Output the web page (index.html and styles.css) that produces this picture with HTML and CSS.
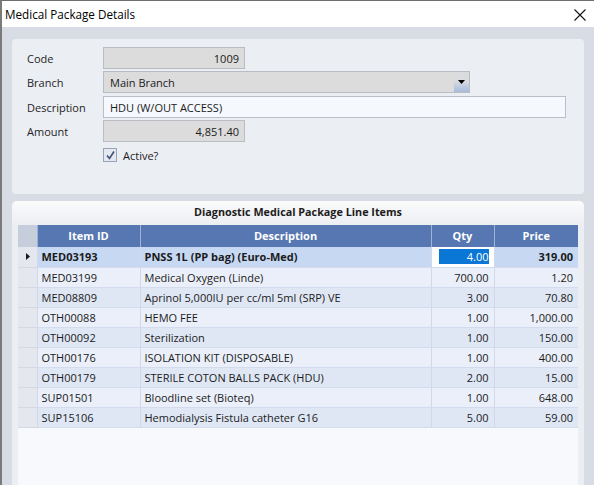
FILE: index.html
```html
<!DOCTYPE html>
<html>
<head>
<meta charset="utf-8">
<link rel="stylesheet" href="styles.css">
</head>
<body>
<div class="window">
  <div class="titlebar">
    <span class="title">Medical Package Details</span>
    <svg class="close" width="12" height="12" viewBox="0 0 12 12"><path d="M0.5 0.5 L11.5 11.5 M11.5 0.5 L0.5 11.5" stroke="#111" stroke-width="1.1" fill="none"/></svg>
  </div>
  <div class="client">
    <div class="panel form">
      <div class="frow r1"><span class="lbl">Code</span><div class="field ro num short">1009</div></div>
      <div class="frow r2"><span class="lbl">Branch</span>
        <div class="field ro combo"><span class="ctext">Main Branch</span>
          <span class="dd"><svg width="7" height="4" viewBox="0 0 7 4"><path d="M0 0 H7 L3.5 4 Z" fill="#000"/></svg></span>
        </div>
      </div>
      <div class="frow r3"><span class="lbl">Description</span><div class="field edit">HDU (W/OUT ACCESS)</div></div>
      <div class="frow r4"><span class="lbl">Amount</span><div class="field ro num short">4,851.40</div></div>
      <div class="frow chk">
        <span class="box"><svg width="11" height="11" viewBox="0 0 11 11"><path d="M2 5.5 L4.5 8.5 L9 1.5" stroke="#3e4f70" stroke-width="1.6" fill="none"/></svg></span>
        <span class="chklbl">Active?</span>
      </div>
    </div>
    <div class="panel gpanel">
      <div class="caption">Diagnostic Medical Package Line Items</div>
      <div class="grid">
        <table>
          <colgroup>
            <col class="c0"><col class="c1"><col class="c2"><col class="c3"><col class="c4">
          </colgroup>
          <thead>
            <tr><th class="ind"></th><th>Item ID</th><th>Description</th><th>Qty</th><th>Price</th></tr>
          </thead>
          <tbody>
            <tr class="sel"><td class="ind"><svg width="4" height="7" viewBox="0 0 4 7"><path d="M0 0 L4 3.5 L0 7 Z" fill="#1a1a1a"/></svg></td><td>MED03193</td><td>PNSS 1L (PP bag) (Euro-Med)</td><td class="n editing"><span class="hl">4.00</span></td><td class="n">319.00</td></tr>
            <tr class="lt"><td class="ind"></td><td>MED03199</td><td>Medical Oxygen (Linde)</td><td class="n">700.00</td><td class="n">1.20</td></tr>
            <tr class="dk"><td class="ind"></td><td>MED08809</td><td>Aprinol 5,000IU per cc/ml 5ml (SRP) VE</td><td class="n">3.00</td><td class="n">70.80</td></tr>
            <tr class="lt"><td class="ind"></td><td>OTH00088</td><td>HEMO FEE</td><td class="n">1.00</td><td class="n">1,000.00</td></tr>
            <tr class="dk"><td class="ind"></td><td>OTH00092</td><td>Sterilization</td><td class="n">1.00</td><td class="n">150.00</td></tr>
            <tr class="lt"><td class="ind"></td><td>OTH00176</td><td>ISOLATION KIT (DISPOSABLE)</td><td class="n">1.00</td><td class="n">400.00</td></tr>
            <tr class="dk"><td class="ind"></td><td>OTH00179</td><td>STERILE COTON BALLS PACK (HDU)</td><td class="n">2.00</td><td class="n">15.00</td></tr>
            <tr class="lt"><td class="ind"></td><td>SUP01501</td><td>Bloodline set (Bioteq)</td><td class="n">1.00</td><td class="n">648.00</td></tr>
            <tr class="dk"><td class="ind"></td><td>SUP15106</td><td>Hemodialysis Fistula catheter G16</td><td class="n">5.00</td><td class="n">59.00</td></tr>
          </tbody>
        </table>
      </div>
    </div>
  </div>
</div>
</body>
</html>
```
FILE: styles.css
```css
* { box-sizing: border-box; }
html, body { margin: 0; padding: 0; }
body {
  width: 594px;
  height: 485px;
  overflow: hidden;
  font-family: "Open Sans", "Noto Sans", sans-serif;
  font-size: 11px;
  color: #1b1b1b;
  background: #d8dde6;
}
.window {
  width: 594px;
  height: 485px;
  border-top: 1px solid #6e6e6e;
  border-left: 2px solid #7a7a7a;
  display: flex;
  flex-direction: column;
}
.titlebar {
  height: 26px;
  background: #ffffff;
  display: flex;
  align-items: center;
  justify-content: space-between;
  padding: 0 8px 0 3px;
  flex: none;
}
.title { font-size: 11.7px; color: #000; }
.close { margin-top: 1px; }
.client {
  flex: 1;
  background: #d7dce5;
  padding: 12px 10px 0 10px;
  display: flex;
  flex-direction: column;
  gap: 7px;
  overflow: hidden;
}
.panel {
  background: #ebeef3;
  border-radius: 4px;
}
.form {
  height: 155px;
  padding: 8px 0 0 15px;
  display: flex;
  flex-direction: column;
}
.frow {
  display: flex;
  align-items: center;
  height: 22px;
}
.r2 { margin-top: 2px; }
.r3 { margin-top: 3px; }
.r4 { margin-top: 2px; }
.lbl { width: 76px; color: #1e1e1e; }
.field {
  height: 22px;
  border: 1px solid #b9bcc2;
  display: flex;
  align-items: center;
  padding: 0 6px;
}
.ro { background: #dcdcdc; }
.num { justify-content: flex-end; }
.short { width: 142px; padding-right: 5px; }
.combo { width: 367px; padding: 0 0 0 6px; justify-content: space-between; }
.ctext { flex: 1; }
.dd {
  width: 15px;
  height: 20px;
  display: flex;
  align-items: center;
  justify-content: center;
  background: linear-gradient(#dcdcdc 0%, #d8dbe0 45%, #a6bbdb 100%);
}
.edit { width: 463px; background: #f5f8fd; border-color: #b8bdc6; }
.chk { margin-top: 6px; height: 14px; padding-left: 76px; }
.box {
  width: 14px;
  height: 14px;
  border: 1px solid #97a3b6;
  background: #e4e9f1;
  display: flex;
  align-items: center;
  justify-content: center;
}
.chklbl { margin-left: 6px; }
.gpanel {
  flex: 1;
  padding: 0 6px;
  display: flex;
  flex-direction: column;
  border-radius: 5px 5px 0 0;
}
.caption {
  height: 24px;
  flex: none;
  display: flex;
  align-items: center;
  justify-content: center;
  padding-bottom: 3px;
  font-weight: bold;
  font-size: 10.8px;
  color: #1c1c1c;
  margin: 0 -6px;
  background: linear-gradient(#fbfbfc, #eceef2);
  border-radius: 5px 5px 0 0;
}
.grid {
  flex: 1;
  background: #f7f9fc;
}
table {
  border-collapse: collapse;
  table-layout: fixed;
  width: 560px;
}
.c0 { width: 19px; }
.c1 { width: 103px; }
.c2 { width: 291px; }
.c3 { width: 63px; }
.c4 { width: 84px; }
th {
  height: 22px;
  background: #5677b1;
  color: #ffffff;
  font-weight: bold;
  text-align: center;
  padding: 0 0 1px 0;
  border-left: 1px solid #9fb3d6;
}
th.ind { background: #c6cedb; border-left: none; }
td {
  height: 20px;
  padding: 0 4px;
  white-space: nowrap;
  overflow: hidden;
  border-left: 1px solid #cfd9ea;
  border-bottom: 1px solid #d2dcee;
}
td.ind {
  background: #e4e7ed;
  border-left: none;
  border-bottom: 1px solid #d4d8e0;
  padding: 0 0 0 8px;
}
td.ind svg { display: block; }
td.n { text-align: right; padding-right: 5px; }
tr.lt td:not(.ind) { background: #eaeff9; }
tr.dk td:not(.ind) { background: #dfe7f5; }
tr.sel td:not(.ind) { background: #c6d8f2; font-weight: bold; }
td.editing { background: #ffffff !important; padding: 0 5px 0 7px; }
.hl {
  display: block;
  background: #0a77d6;
  color: #ffffff;
  font-weight: normal;
  height: 15px;
  line-height: 15px;
  text-align: right;
}
```
